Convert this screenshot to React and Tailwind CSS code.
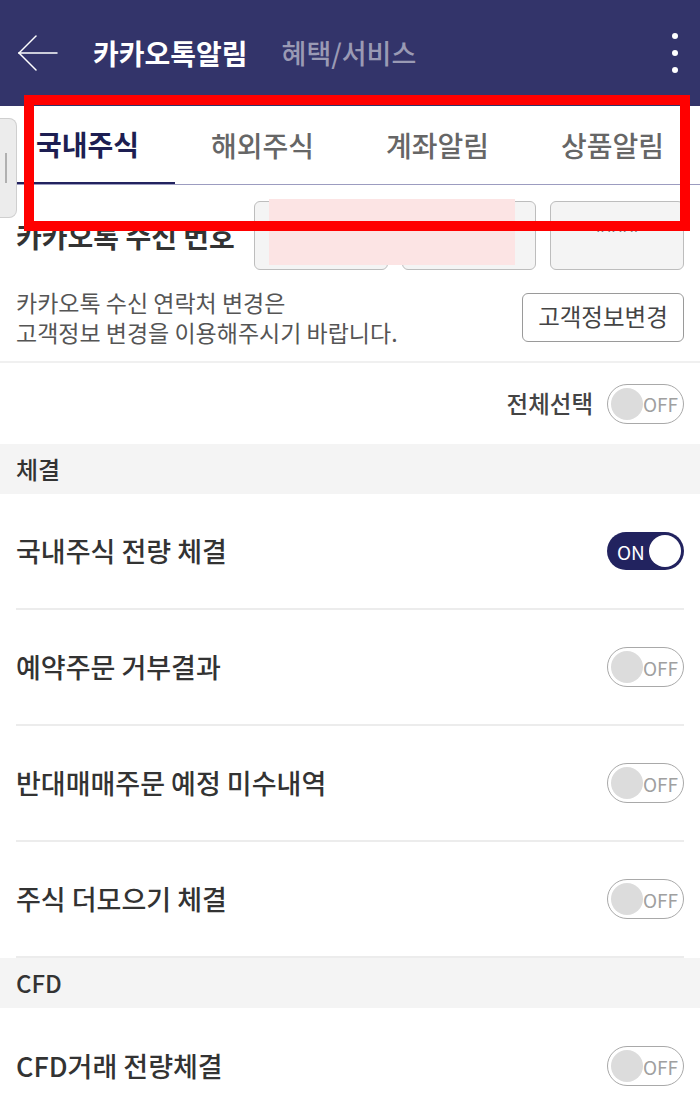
import React from "react";

const FONT = { fontFamily: '"Noto Sans CJK KR", "Noto Sans", sans-serif' };

function Toggle({ on }) {
  if (on) {
    return (
      <div className="flex h-[38px] w-[77px] items-center justify-between rounded-full bg-[#22235f] pl-[10px] pr-[3px]">
        <span className="text-[19px] leading-none text-white">ON</span>
        <span className="h-[32px] w-[32px] rounded-full bg-white" />
      </div>
    );
  }
  return (
    <div className="flex h-[40px] w-[77px] items-center justify-between rounded-full border-[1.5px] border-[#a9a9a9] bg-white pl-[3px] pr-[5px]">
      <span className="h-[32px] w-[32px] rounded-full bg-[#dcdcdc]" />
      <span className="text-[19px] leading-none text-[#a0a0a0]">OFF</span>
    </div>
  );
}

function Row({ label, on, last }) {
  return (
    <div className="px-4">
      <div className={`flex h-[116px] items-center justify-between ${last ? "" : "border-b-2 border-[#ececec]"}`}>
        <span className="text-[27px] font-medium text-[#333]">{label}</span>
        <Toggle on={on} />
      </div>
    </div>
  );
}

function SectionHeader({ title }) {
  return (
    <div className="flex h-[50px] items-center bg-[#f4f4f4] px-4">
      <span className="text-[24px] font-medium text-[#333]">{title}</span>
    </div>
  );
}

export default function App() {
  const tabs = ["국내주식", "해외주식", "계좌알림", "상품알림"];
  return (
    <div className="relative h-[1113px] w-[700px] overflow-hidden bg-white" style={FONT}>
      {/* Header */}
      <div className="flex h-[106px] items-center bg-[#33346a] pl-[18px] pr-[22px]">
        <svg width="40" height="36" viewBox="0 0 40 36" fill="none" stroke="white" strokeWidth="1.5" strokeLinecap="round">
          <path d="M1 18 H39" />
          <path d="M1 18 L18 1" />
          <path d="M1 18 L18 35" />
        </svg>
        <span className="ml-[35px] text-[28px] font-bold text-white">카카오톡알림</span>
        <span className="ml-[34px] text-[27px] font-medium text-[#9a9ab4]">혜택/서비스</span>
        <div className="ml-auto flex flex-col items-center gap-[11px]">
          <span className="h-[6px] w-[6px] rounded-full bg-white" />
          <span className="h-[6px] w-[6px] rounded-full bg-white" />
          <span className="h-[6px] w-[6px] rounded-full bg-white" />
        </div>
      </div>

      {/* Tabs */}
      <div className="grid h-[79px] grid-cols-4 border-b border-[#9c9cc0]">
        {tabs.map((t, i) => (
          <div
            key={t}
            className={`flex items-center justify-center text-[28px] ${
              i === 0 ? "border-b-2 border-[#22235f] font-bold text-[#1d1e52]" : "font-medium text-[#666]"
            }`}
          >
            {t}
          </div>
        ))}
      </div>

      {/* Phone number section */}
      <div className="border-b-2 border-[#f0f0f0] px-4 pb-[14px] pt-[16px]">
        <div className="flex items-center">
          <span className="text-[28px] font-bold text-[#333]">카카오톡 수신 번호</span>
          <div className="ml-auto flex gap-[14px]">
            <div className="h-[69px] w-[134px] rounded-[6px] border border-[#bdbdbd] bg-[#f4f4f4]" />
            <div className="h-[69px] w-[134px] rounded-[6px] border border-[#bdbdbd] bg-[#f4f4f4]" />
            <div className="flex h-[69px] w-[134px] items-start justify-center rounded-[6px] border border-[#bdbdbd] bg-[#f4f4f4] pt-[18px] text-[22px] font-bold leading-none text-[#555]">
              ****
            </div>
          </div>
        </div>
        <div className="mt-[17px] flex items-center justify-between">
          <div className="flex flex-col text-[23px] leading-[30px] text-[#555]">
            <span>카카오톡 수신 연락처 변경은</span>
            <span>고객정보 변경을 이용해주시기 바랍니다.</span>
          </div>
          <div className="flex h-[49px] w-[162px] items-center justify-center rounded-[6px] border border-[#9a9a9a] text-[23.5px] text-[#444]">
            고객정보변경
          </div>
        </div>
      </div>

      {/* Select all */}
      <div className="flex h-[81px] items-center justify-end gap-[14px] px-4">
        <span className="text-[23.5px] font-medium text-[#444]">전체선택</span>
        <Toggle on={false} />
      </div>

      <SectionHeader title="체결" />
      <Row label="국내주식 전량 체결" on />
      <Row label="예약주문 거부결과" />
      <Row label="반대매매주문 예정 미수내역" />
      <Row label="주식 더모으기 체결" />
      <SectionHeader title="CFD" />
      <Row label="CFD거래 전량체결" last />

      {/* Pink mask over phone number */}
      <div className="absolute left-[269px] top-[199px] h-[66px] w-[246px] bg-[#fce4e4]" />

      {/* Left floating handle */}
      <div className="absolute left-0 top-[118px] flex h-[100px] w-[17px] items-center rounded-r-[8px] border border-l-0 border-[#cfcfcf] bg-[#ececec] pl-[5px]">
        <span className="h-[30px] w-[2px] bg-[#b0b0b0]" />
      </div>

      {/* Red annotation box */}
      <div className="absolute left-[24px] top-[95px] h-[136px] w-[666px] border-[10px] border-[#ff0000]" />
    </div>
  );
}
